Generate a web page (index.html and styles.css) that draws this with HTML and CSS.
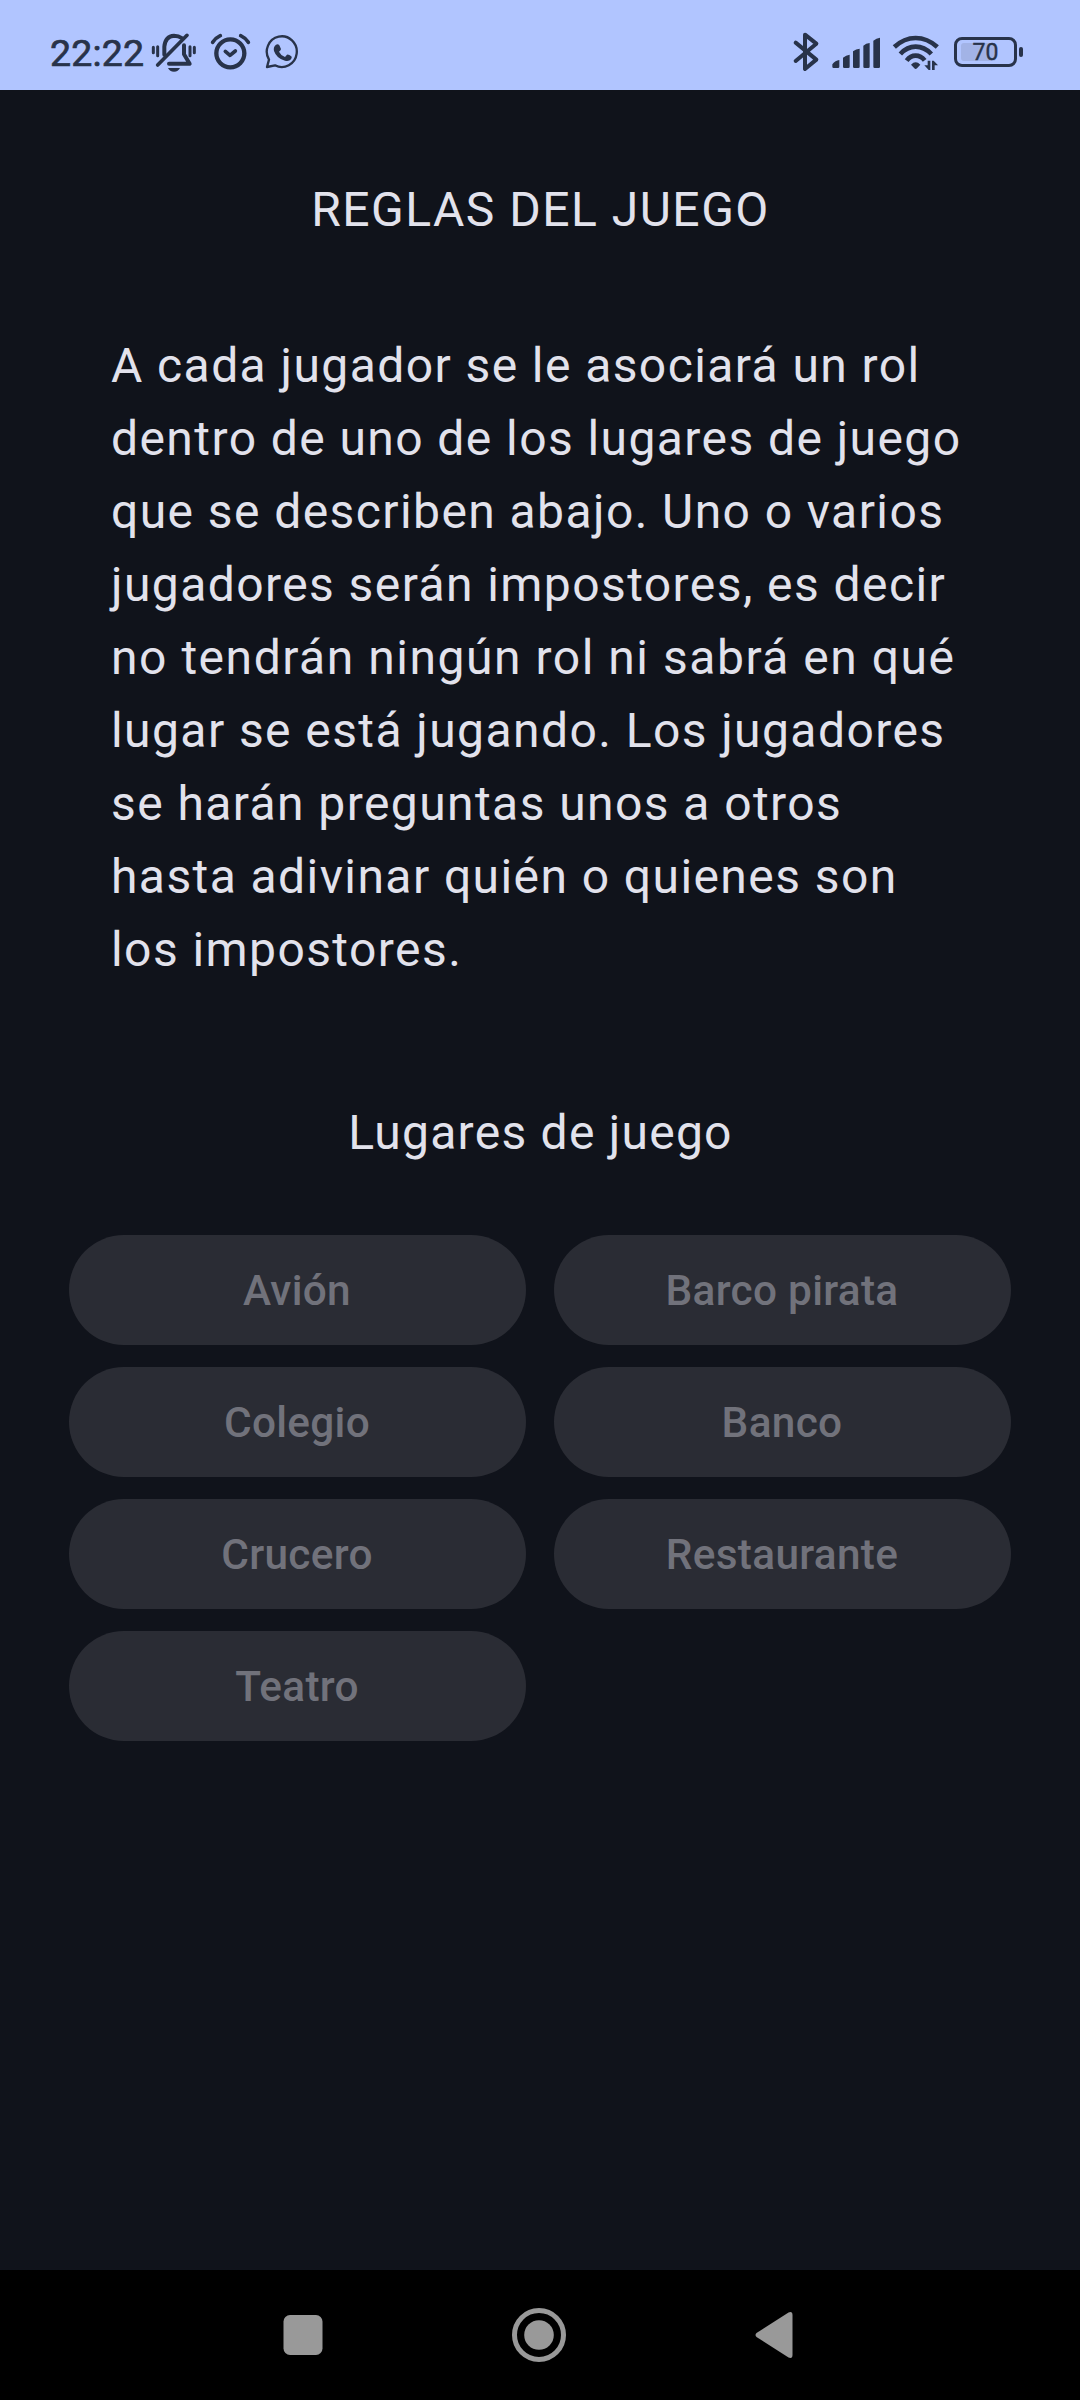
FILE: index.html
```html
<!DOCTYPE html>
<html lang="es">
<head>
<meta charset="utf-8">
<title>Reglas del juego</title>
<link rel="stylesheet" href="styles.css">
</head>
<body>
<div class="screen">
  <header class="status">
    <span class="time">22:22</span>
    <svg class="bell" viewBox="360 60 144 132">
      <g class="line" stroke-width="9">
        <path d="M370 112V128M383 110V137M480 110V137M493 112V128" stroke-width="9"/>
        <path d="M403 134V110Q406 78 432 77Q446 77 455 84M462 106V133L479 161H417" stroke-width="12"/>
        <path d="M471 76L383 165" stroke-width="11"/>
      </g>
      <path class="fill" d="M414 174H450Q445 185 432 185T414 174Z"/>
    </svg>
    <svg class="alarm" viewBox="540 60 123 132">
      <g class="line" stroke-width="13">
        <circle cx="601" cy="130" r="42"/>
        <path d="M548 97Q556 84 571 77M655 97Q647 84 632 77" stroke-width="11"/>
        <path d="M586 124L600 136L616 123" stroke-width="11"/>
      </g>
    </svg>
    <svg class="chat" viewBox="702 60 108 132">
      <path class="line" stroke-width="7" d="M711 171L717 149A45 46 0 1 1 735 166Z"/>
      <path class="fill" d="M738 104Q744 100 748 106L753 117Q753 120 747 125Q752 136 765 141L771 134Q773 132 778 135L784 139Q787 142 783 148Q777 155 765 152Q740 146 732 123Q729 111 738 104Z"/>
    </svg>
    <span class="spacer"></span>
    <svg class="bluetooth" viewBox="66 60 84 132">
      <path class="line" stroke-width="12" d="M77 98L139 149L105 177V74L139 101L77 153"/>
    </svg>
    <svg class="signal" viewBox="183 60 150 132">
      <path class="fill" d="M187 163Q196 151 208 150V170Q208 174 204 174H191Q187 174 187 170ZM219 143Q228 135 239 134V170Q239 174 235 174H223Q219 174 219 170ZM249 124Q258 117 269 116V170Q269 174 265 174H253Q249 174 249 170ZM280 107Q288 100 299 99V170Q299 174 295 174H284Q280 174 280 170ZM310 92Q319 84 330 83V170Q330 174 326 174H314Q310 174 310 170Z"/>
    </svg>
    <svg class="wifi" viewBox="366 60 144 132">
      <g class="line flat" stroke-width="14">
        <path d="M373 111Q402 84 437 84T502 111"/>
        <path d="M391 132Q411 110 437 110T484 132"/>
        <path d="M410 152Q421 137 437 137T464 151"/>
      </g>
      <path class="fill" d="M423 164Q430 157 437 157T451 164L441 175Q437 179 433 175ZM473 152H481V180H476L463 166H473ZM486 180V152H491L504 166H494V180Z"/>
    </svg>
    <div class="battery">
      <div class="cell"><span class="level"></span><span class="percent">70</span></div>
      <span class="tip"></span>
    </div>
  </header>
  <main class="content">
    <h1 class="text title">REGLAS DEL JUEGO</h1>
    <p class="text rules">A cada jugador se le asociará un rol<br>dentro de uno de los lugares de juego<br>que se describen abajo. Uno o varios<br>jugadores serán impostores, es decir<br><span class="loose">no tendrán ningún rol ni sabrá en qué</span><br>lugar se está jugando. Los jugadores<br>se harán preguntas unos a otros<br>hasta adivinar quién o quienes son<br>los impostores.</p>
    <h2 class="text title subtitle">Lugares de juego</h2>
    <div class="places">
      <button class="place" disabled>Avión</button>
      <button class="place" disabled>Barco pirata</button>
      <button class="place" disabled>Colegio</button>
      <button class="place" disabled>Banco</button>
      <button class="place" disabled>Crucero</button>
      <button class="place" disabled>Restaurante</button>
      <button class="place" disabled>Teatro</button>
    </div>
  </main>
  <nav class="nav">
    <svg class="recent" viewBox="0 0 40 60"><rect x="0.5" y="10" width="39" height="40" rx="6.5"/></svg>
    <svg class="home" viewBox="0 0 54 60"><circle class="ring" cx="27" cy="30" r="24.5"/><circle cx="27" cy="30" r="14.8"/></svg>
    <svg class="back" viewBox="0 0 38 60"><path d="M1.5 28L33.5 7.500Q37.500 6 37.500 10V50Q37.500 54 33.500 52.500L1.500 32Q-.5 30 1.500 28Z"/></svg>
  </nav>
</div>
</body>
</html>
```
FILE: styles.css
```css
* { box-sizing: border-box; }
body { margin: 0; background: #10131b; font-family: Roboto, sans-serif; }
.screen { width: 1080px; height: 2400px; display: flex; flex-direction: column; }
.status { height: 90px; padding: 14px 56px 0 50px; display: flex; align-items: center; background: #b1c5ff; color: #28334a; }
.status svg { height: 44px; flex: none; }
.time { width: 100px; font-size: 37.5px; line-height: 44px; font-weight: 400; -webkit-text-stroke: 0.7px #28334a; padding-top: 2px; letter-spacing: 0.2px; }
.line { fill: none; stroke: #28334a; stroke-linecap: round; stroke-linejoin: round; }
.flat { stroke-linecap: butt; }
.fill { fill: #28334a; }
.bell { width: 48px; }
.alarm { width: 41px; margin-left: 12px; }
.chat { width: 36px; margin-left: 13px; }
.spacer { flex: 1; }
.bluetooth { width: 28px; }
.signal { width: 50px; margin-left: 11px; }
.wifi { width: 48px; margin-left: 11px; }
.battery { display: flex; align-items: center; gap: 2px; margin-left: 14px; width: 70px; }
.cell { position: relative; width: 63px; height: 30px; border: 3px solid #28334a; border-radius: 8px; padding: 3px 4px; }
.level { display: block; width: 35px; height: 18px; border-radius: 3px; background: #a2b3e6; }
.percent { position: absolute; inset: 0; text-align: center; font-size: 23px; line-height: 26px; -webkit-text-stroke: 0.4px #28334a; }
.tip { width: 4px; height: 10px; border-radius: 2px; background: #28334a; }
.content { flex: 1; padding: 83px 69px 0; }
.text { margin: 0; color: #e2e2ec; font-size: 48px; line-height: 73px; font-weight: 400; letter-spacing: 1.42px; }
.title { text-align: center; padding-left: 1px; letter-spacing: 1.5px; }
.subtitle { letter-spacing: 1.25px; }
.rules { padding: 0 42px; margin: 83px 0 110px; white-space: nowrap; }
.loose { letter-spacing: 1.53px; }
.places { display: grid; grid-template-columns: 1fr 1fr; gap: 22px 28px; margin-top: 66px; }
.place { height: 110px; border: 0; border-radius: 55px; padding: 0 1px 0 0; background: #2a2c34; color: #71727b; font: 500 42.35px/55px Roboto, sans-serif; letter-spacing: 0.3px; }
.nav { height: 130px; padding-left: 283px; display: flex; align-items: center; background: #000; fill: #999; }
.nav svg { height: 60px; }
.recent { width: 40px; }
.home { width: 54px; margin-left: 189px; }
.back { width: 38px; margin-left: 189px; }
.ring { fill: none; stroke: #999; stroke-width: 5px; }
```
